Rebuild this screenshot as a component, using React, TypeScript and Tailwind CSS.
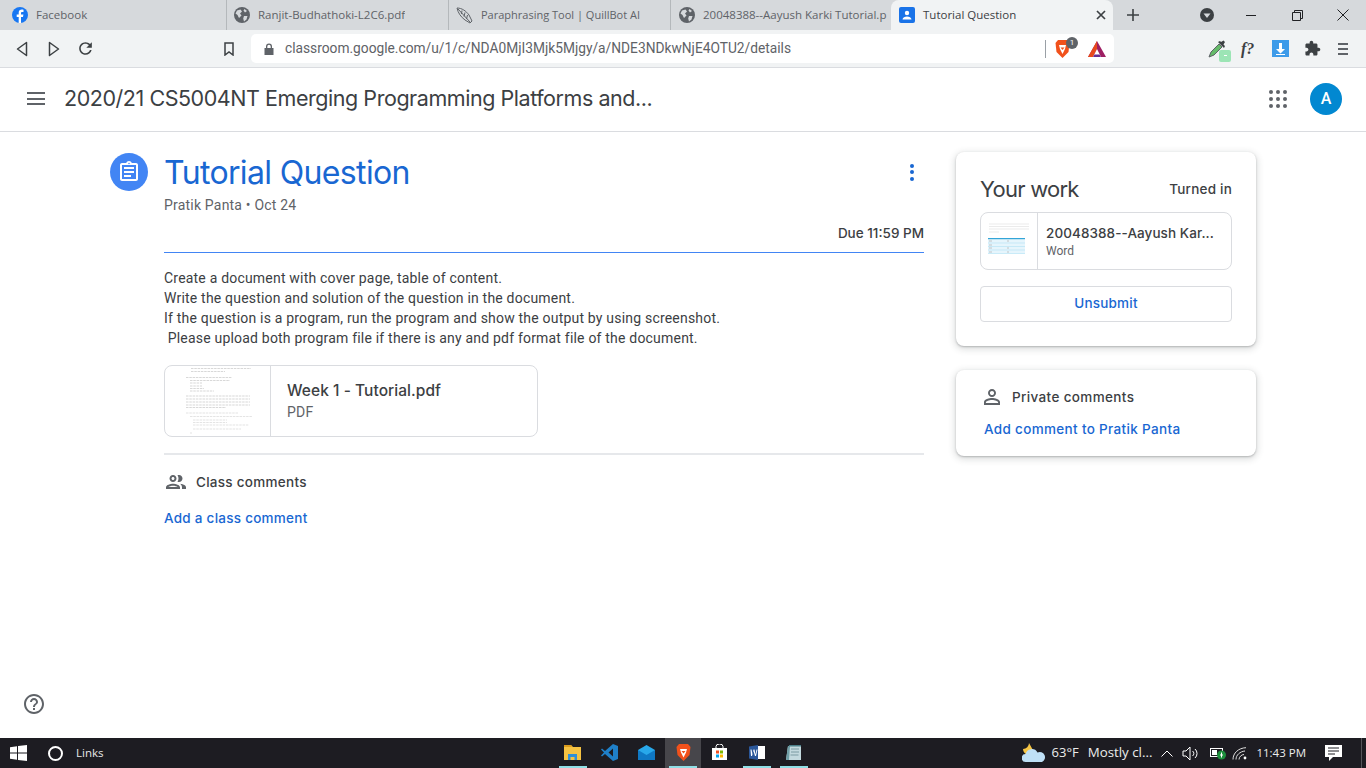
import React from "react";

const sans = "font-['Roboto','Liberation_Sans',sans-serif]";
const display = "font-['Inter','Roboto',sans-serif]";
const ui = "font-['Open_Sans','Liberation_Sans',sans-serif]";

const Mat = ({ d, size, color, className = "" }: { d: string; size: number; color: string; className?: string }) => (
  <svg width={size} height={size} viewBox="0 0 24 24" fill={color} className={"shrink-0 " + className}><path d={d} /></svg>
);

const Globe = () => (
  <svg width="16" height="16" viewBox="0 0 16 16" className="shrink-0">
    <circle cx="8" cy="8" r="8" fill="#5f6368" />
    <path d="M3 3.5 6.5 2.5 8 4.5 6 6.5 7.5 8.5 5 11 3.5 8 1.5 6.5ZM10 9h3.5l-1 3.5-2.5 2-.8-3ZM10.500 2 13 4l-2 1.500L9.500 3.500Z" fill="#d6d9dc" />
  </svg>
);

const Tab = ({ icon, title }: { icon: React.ReactNode; title: string }) => (
  <div className="flex h-full w-[222px] shrink-0 items-center gap-[8px] overflow-hidden border-r border-[#b4b8bb] pl-[7px] pr-[2px]">
    {icon}
    <span className={"overflow-hidden whitespace-nowrap text-[11.5px] text-[#5f6368] " + ui}>{title}</span>
  </div>
);

const TabStrip = () => (
  <div className="flex h-[30px] shrink-0 items-stretch bg-[#d6d9dc]">
    <div className="flex h-[30px] w-[227px] shrink-0 items-center gap-[8px] border-r border-[#b4b8bb] pl-[12px]">
      <svg width="16" height="16" viewBox="0 0 16 16" className="shrink-0">
        <circle cx="8" cy="8" r="8" fill="#1877f2" />
        <path d="M9 16V10h2l.4-2.400H9V6.200c0-.8.3-1.300 1.300-1.300h1.200V2.800C11.200 2.700 10.500 2.600 9.800 2.600 8 2.600 6.700 3.700 6.700 5.800v1.800H4.700V10h2v6Z" fill="#fff" />
      </svg>
      <span className={"text-[11.5px] text-[#5f6368] " + ui}>Facebook</span>
    </div>
    <Tab icon={<Globe />} title="Ranjit-Budhathoki-L2C6.pdf" />
    <div className="flex h-full w-[222px] shrink-0 items-center gap-[8px] overflow-hidden border-r border-[#b4b8bb] pl-[7px]">
      <svg width="17" height="17" viewBox="0 0 17 17" fill="none" stroke="#5f6368" strokeWidth="1" className="shrink-0">
        <path d="M1 1c5 0 9 3 12 7l3 6-2 2-5-3C5 10 2 6 1 1Z" />
        <path d="M2 2 14 15M6 3.500 5.500 7M9 5.500 8 9.500M11.500 8 10.500 12" />
      </svg>
      <span className={"whitespace-nowrap text-[11px] text-[#5f6368] " + ui}>Paraphrasing Tool | QuillBot AI</span>
    </div>
    <div className="flex h-full w-[220px] shrink-0 items-center gap-[8px] overflow-hidden pl-[8px]">
      <Globe />
      <span className={"whitespace-nowrap text-[11.5px] text-[#5f6368] " + ui}>20048388--Aayush Karki Tutorial.p</span>
    </div>
    <div className="flex h-full w-[222px] shrink-0 items-center rounded-t-[8px] bg-[#f1f3f4] pl-[8px] pr-[7px]">
      <svg width="16" height="16" viewBox="0 0 16 16" className="shrink-0">
        <rect width="16" height="16" rx="2" fill="#1a73e8" />
        <circle cx="8" cy="6" r="2.200" fill="#fff" />
        <path d="M3.500 12.500c0-2 2.500-3 4.500-3s4.500 1 4.500 3Z" fill="#fff" />
      </svg>
      <span className={"ml-[8px] flex-1 whitespace-nowrap text-[11.5px] text-[#3c4043] " + ui}>Tutorial Question</span>
      <svg width="10" height="10" viewBox="0 0 10 10" stroke="#3c4043" strokeWidth="1.700"><path d="M1 1l8 8M9 1 1 9" /></svg>
    </div>
    <div className="flex w-[40px] shrink-0 items-center justify-center">
      <svg width="14" height="14" viewBox="0 0 14 14" stroke="#3c4043" strokeWidth="1.600"><path d="M7 1v12M1 7h12" /></svg>
    </div>
    <div className="ml-[47px] flex w-[14px] shrink-0 items-center justify-center">
      <svg width="14" height="14" viewBox="0 0 14 14"><circle cx="7" cy="7" r="7" fill="#3c4043" /><path d="M3.500 5.500h7L7 10Z" fill="#d6d9dc" /></svg>
    </div>
    <div className="ml-[14px] flex w-[46px] shrink-0 items-center justify-center">
      <span className="block h-px w-[10px] bg-[#202124]" />
    </div>
    <div className="flex w-[46px] shrink-0 items-center justify-center">
      <svg width="11" height="11" viewBox="0 0 11 11" fill="none" stroke="#202124"><path d="M.500 2.500h8v8h-8ZM2.500 2.500v-2h8v8h-2" /></svg>
    </div>
    <div className="flex w-[46px] shrink-0 items-center justify-center">
      <svg width="12" height="12" viewBox="0 0 12 12" stroke="#202124"><path d="M.500.500l11 11M11.500.500l-11 11" /></svg>
    </div>
  </div>
);

const Toolbar = () => (
  <div className="flex h-[38px] shrink-0 items-center border-b border-[#dadce0] bg-[#f1f3f4]">
    <div className="flex w-[251px] shrink-0 items-center">
      <svg width="12" height="16" viewBox="0 0 12 16" fill="none" stroke="#3c4043" strokeWidth="1.500" className="ml-[16px]"><path d="M10.500 1.500 1.500 8l9 6.500Z" strokeLinejoin="round" /></svg>
      <svg width="12" height="16" viewBox="0 0 12 16" fill="none" stroke="#3c4043" strokeWidth="1.500" className="ml-[20px]"><path d="M1.500 1.500 10.500 8l-9 6.500Z" strokeLinejoin="round" /></svg>
      <svg width="19" height="19" viewBox="0 0 24 24" fill="#3c4043" className="ml-[16px]"><path d="M17.650 6.350C16.200 4.900 14.210 4 12 4c-4.420 0-7.990 3.580-7.990 8s3.570 8 7.990 8c3.730 0 6.840-2.550 7.730-6h-2.080c-.82 2.330-3.040 4-5.650 4-3.310 0-6-2.690-6-6s2.690-6 6-6c1.660 0 3.140.69 4.220 1.780L13 11h7V4l-2.350 2.350z" /></svg>
      <svg width="10" height="14" viewBox="0 0 10 14" fill="none" stroke="#3c4043" strokeWidth="1.500" className="ml-[129px]"><path d="M1 1h8v12L5 10 1 13Z" /></svg>
    </div>
    <div className="flex h-[29px] w-[863px] shrink-0 items-center rounded-[5px] bg-white pl-[13px] pr-[8px]">
      <svg width="10" height="12" viewBox="0 0 10 12" fill="#5f6368" className="shrink-0"><path d="M2 5V3.500a3 3 0 0 1 6 0V5h1.500v7H.5V5Zm1.300 0h3.400V3.500a1.700 1.700 0 0 0-3.400 0Z" /></svg>
      <span className={"ml-[11px] flex-1 whitespace-nowrap text-[13.75px] text-[#5f6368] " + sans}>classroom.google.com/u/1/c/NDA0MjI3Mjk5Mjgy/a/NDE3NDkwNjE4OTU2/details</span>
      <span className="mr-[9px] h-[18px] w-px bg-[#9aa0a6]" />
      <div className="relative mr-[18px] h-[18px] w-[15px]">
        <svg width="15" height="18" viewBox="0 0 15 18"><path d="M3 0h9l2.500 3-1 9L7.500 18 1.500 12l-1-9Z" fill="#f1511b" /><path d="M4 5h7l-1 4-2.500 5L5 9Z" fill="#fff" /><path d="M5.500 7.500 7.500 10l2-2.500Z" fill="#f1511b" /></svg>
        <span className={"absolute left-[11px] top-[-3px] flex h-[12px] w-[12px] items-center justify-center rounded-full bg-[#5f6368] text-[8px] text-white " + sans}>1</span>
      </div>
      <svg width="18" height="16" viewBox="0 0 18 16" className="shrink-0"><path d="M9 0 18 16H0Z" fill="#9e1f63" /><path d="M9 0 0 16h5L9 8Z" fill="#e8491c" /><path d="M9 8 5 16h8Z" fill="#fff" /><path d="M5 16h8l-1.500-2.500h-5Z" fill="#662d91" /></svg>
    </div>
    <div className="ml-[93px] flex shrink-0 items-center">
      <div className="relative h-[20px] w-[20px]">
        <svg width="20" height="20" viewBox="0 0 20 20"><path d="M2 18 4 13 12 5l3 3-8 8Z" fill="#66bb6a" stroke="#5f6368" /><path d="M11 3 17 9l1-2-1.500-1.500L18 3l-1.500-1.500L14 3 13 2Z" fill="#3c4043" /></svg>
        <span className="absolute bottom-[-3px] right-[-4px] flex h-[12px] w-[12px] items-center justify-center rounded-[2px] bg-[#9ce5b5]"><span className="h-px w-[3px] bg-white" /></span>
      </div>
      <span className="ml-[14px] w-[18px] font-['Liberation_Serif',serif] text-[16px] font-bold italic leading-none text-[#3c4043]">f?</span>
      <svg width="17" height="17" viewBox="0 0 17 17" className="ml-[13px]"><rect width="17" height="17" fill="#3d9be9" /><path d="M7 3h3v6h3l-4.500 4.500L4 9h3Z" fill="#fff" /><rect x="4" y="14" width="9" height="1" fill="#fff" /></svg>
      <Mat size={17} color="#3c4043" className="ml-[15px]" d="M20.500 11H19V7c0-1.100-.9-2-2-2h-4V3.500C13 2.120 11.880 1 10.500 1S8 2.120 8 3.500V5H4c-1.100 0-1.990.9-1.990 2v3.800H3.500c1.490 0 2.700 1.210 2.700 2.700s-1.210 2.700-2.700 2.700H2V20c0 1.100.9 2 2 2h3.800v-1.500c0-1.490 1.210-2.700 2.700-2.700 1.490 0 2.700 1.210 2.700 2.700V22H17c1.100 0 2-.9 2-2v-4h1.500c1.380 0 2.500-1.120 2.500-2.500S21.880 11 20.500 11z" />
      <div className="ml-[17px] flex w-[10px] flex-col gap-[3px]">
        <span className="h-[2px] bg-[#5f6368]" /><span className="h-[2px] bg-[#5f6368]" /><span className="h-[2px] bg-[#5f6368]" />
      </div>
    </div>
  </div>
);

const AppHeader = () => (
  <header className="flex h-[64px] shrink-0 items-center border-b border-[#dadce0] bg-white pb-[2px] pl-[27px] pr-[24px]">
    <div className="flex w-[18px] flex-col gap-[3.500px]">
      <span className="h-[2px] bg-[#5f6368]" /><span className="h-[2px] bg-[#5f6368]" /><span className="h-[2px] bg-[#5f6368]" />
    </div>
    <h1 className={"ml-[19px] flex-1 whitespace-nowrap text-[21.5px] tracking-[-0.45px] text-[#3c4043] " + display}>2020/21 CS5004NT Emerging Programming Platforms and...</h1>
    <div className="mr-[23px] grid grid-cols-3 gap-[3px]">
      {Array.from({ length: 9 }).map((_, i) => (
        <span key={i} className="h-[4px] w-[4px] rounded-full bg-[#5f6368]" />
      ))}
    </div>
    <div className={"flex h-[32px] w-[32px] items-center justify-center rounded-full bg-[#0288d1] text-[16px] font-medium text-white " + sans}>A</div>
  </header>
);

const PdfThumb = () => (
  <svg width="105" height="70" viewBox="0 0 105 70" className="shrink-0">
    <g stroke="#bdbdbd" strokeWidth="0.600" strokeDasharray="2.500 0.800">
      <path d="M26 2.500h60M26 5.500h34" />
      <path d="M21 11.500h46M25 14.500h40M25 17h12M25 20h12M25 22.500h14M25 25h24" />
      <path d="M21 30h64M21 33h64M21 36h64M21 39h64M21 41.500h40" />
    </g>
    <g stroke="#d2d2d2" strokeWidth="0.600" strokeDasharray="2.500 0.800">
      <path d="M21 47h52M25 50.500h62M28 54h34M28 56.500h34M28 59h56M28 63h48M25 67h2" />
    </g>
  </svg>
);

const WordThumb = () => (
  <svg width="56" height="56" viewBox="0 0 56 56" className="shrink-0">
    <g stroke="#e2e2e2" strokeWidth="0.700"><path d="M8 11h40M8 13.500h40M8 16h40M8 19h10" /></g>
    <rect x="7" y="25" width="37" height="1.500" fill="#33a5d8" />
    <rect x="7" y="26.500" width="37" height="14" fill="#e6f5fc" />
    <g stroke="#b8e4f5" strokeWidth="0.700"><path d="M7 30h37M7 33.500h37M7 37h37M7 40.500h37" /></g>
    <g stroke="#b0b0b0" strokeWidth="0.700"><path d="M8 28h3M8 32h3M8 35h3M8 39h3M26 28h2M26 35h2M26 39h2" /></g>
  </svg>
);

const LeftColumn = () => (
  <div className="ml-[110px] flex w-[814px] shrink-0 items-start gap-[16px]">
    <div className="mt-[21px] flex h-[38px] w-[38px] shrink-0 items-center justify-center rounded-full bg-[#4285f4]">
      <Mat size={24} color="#fff" d="M7 15h7v2H7zm0-4h10v2H7zm0-4h10v2H7zm12-4h-4.180C14.400 1.840 13.300 1 12 1s-2.400.84-2.820 2H5c-1.100 0-2 .9-2 2v14c0 1.100.9 2 2 2h14c1.100 0 2-.9 2-2V5c0-1.100-.9-2-2-2zm-7-.25c.41 0 .75.34.75.75s-.34.75-.75.75-.75-.34-.75-.75.34-.75.75-.75zM19 19H5V5h14v14z" />
    </div>
    <div className="flex w-[760px] flex-col">
      <div className="mt-[18px] flex h-[44px] items-center justify-between">
        <h2 className={"translate-y-px whitespace-nowrap text-[32px] font-normal leading-[44px] tracking-[-0.65px] text-[#1967d2] " + display}>Tutorial Question</h2>
        <div className="mr-[10px] flex flex-col gap-[2.500px]">
          <span className="h-[4px] w-[4px] rounded-full bg-[#1967d2]" /><span className="h-[4px] w-[4px] rounded-full bg-[#1967d2]" /><span className="h-[4px] w-[4px] rounded-full bg-[#1967d2]" />
        </div>
      </div>
      <p className={"mt-[1px] text-[14px] leading-[20px] tracking-[0.2px] text-[#5f6368] " + sans}>Pratik Panta • Oct 24</p>
      <p className={"mt-[8px] text-right text-[13.5px] font-medium leading-[20px] text-[#3c4043] " + display}>Due 11:59 PM</p>
      <div className="mt-[9px] h-[1px] bg-[#4285f4]" />
      <div className={"mt-[15px] text-[14px] leading-[20px] tracking-[0.2px] text-[#3c4043] " + sans}>
        <p>Create a document with cover page, table of content.</p>
        <p>Write the question and solution of the question in the document.</p>
        <p>If the question is a program, run the program and show the output by using screenshot.</p>
        <p className="whitespace-pre"> Please upload both program file if there is any and pdf format file of the document.</p>
      </div>
      <div className="mt-[17px] flex h-[72px] w-[374px] items-stretch overflow-hidden rounded-[8px] border border-[#dadce0]">
        <PdfThumb />
        <div className="flex flex-1 flex-col justify-center border-l border-[#dadce0] pl-[16px]">
          <span className={"text-[15.5px] font-medium leading-[22px] tracking-[0.05px] text-[#3c4043] " + display}>Week 1 - Tutorial.pdf</span>
          <span className={"text-[14px] leading-[20px] tracking-[0.2px] text-[#5f6368] " + sans}>PDF</span>
        </div>
      </div>
      <div className="mt-[16px] h-[2px] bg-[#e6e8eb]" />
      <div className="mt-[15px] flex items-center gap-[8px]">
        <Mat size={24} color="#5f6368" d="M9 13.750c-2.340 0-7 1.170-7 3.500V19h14v-1.750c0-2.330-4.660-3.500-7-3.500zM4.340 17c.84-.58 2.870-1.250 4.660-1.250s3.820.67 4.660 1.250H4.340zM9 12c1.930 0 3.500-1.570 3.500-3.500S10.930 5 9 5 5.500 6.570 5.500 8.500 7.070 12 9 12zm0-5c.83 0 1.500.67 1.500 1.500S9.830 10 9 10s-1.500-.67-1.500-1.500S8.170 7 9 7zm7.040 6.810c1.160.84 1.960 1.960 1.960 3.440V19h4v-1.750c0-2.020-3.500-3.170-5.960-3.440zM15 12c1.930 0 3.500-1.570 3.500-3.500S16.930 5 15 5c-.54 0-1.040.13-1.500.35.63.89 1 1.980 1 3.150s-.37 2.260-1 3.150c.46.22.96.35 1.500.35z" />
        <span className={"text-[13.5px] font-medium tracking-[0.28px] text-[#3c4043] " + display}>Class comments</span>
      </div>
      <span className={"mt-[14px] text-[13.5px] font-medium leading-[20px] tracking-[0.26px] text-[#1967d2] " + display}>Add a class comment</span>
    </div>
  </div>
);

const card = "rounded-[8px] bg-white shadow-[0_1px_2px_rgba(60,64,67,0.3),0_2px_6px_2px_rgba(60,64,67,0.15)]";

const RightColumn = () => (
  <div className="ml-[32px] mt-[20px] flex w-[300px] shrink-0 flex-col gap-[24px]">
    <section className={"h-[194px] p-[24px] " + card}>
      <div className="flex h-[26px] items-center justify-between">
        <h3 className={"text-[22px] font-normal tracking-[-0.75px] text-[#3c4043] " + display}>Your work</h3>
        <span className={"text-[13.5px] font-medium tracking-[0.22px] text-[#3c4043] " + display}>Turned in</span>
      </div>
      <div className="mt-[10px] flex h-[58px] items-stretch overflow-hidden rounded-[8px] border border-[#dadce0]">
        <WordThumb />
        <div className="flex w-0 flex-1 flex-col justify-center border-l border-[#dadce0] px-[8px]">
          <span className={"whitespace-nowrap text-[13.5px] font-medium leading-[20px] tracking-[0.08px] text-[#3c4043] " + display}>20048388--Aayush Kar...</span>
          <span className={"text-[12px] leading-[16px] text-[#5f6368] " + sans}>Word</span>
        </div>
      </div>
      <button className={"mt-[16px] block h-[36px] w-full rounded-[4px] border border-[#dadce0] pb-[2px] text-[13.5px] font-medium tracking-[0.2px] text-[#1967d2] " + display}>Unsubmit</button>
    </section>
    <section className={"h-[86px] px-[24px] pt-[15px] " + card}>
      <div className="flex items-center gap-[8px]">
        <Mat size={24} color="#5f6368" d="M12 5.900c1.160 0 2.100.94 2.100 2.100s-.94 2.100-2.100 2.100S9.900 9.160 9.900 8s.94-2.100 2.100-2.100m0 9c2.970 0 6.100 1.460 6.100 2.100v1.100H5.900V17c0-.64 3.130-2.100 6.100-2.100M12 4C9.790 4 8 5.790 8 8s1.790 4 4 4 4-1.790 4-4-1.790-4-4-4zm0 9c-2.670 0-8 1.340-8 4v3h16v-3c0-2.660-5.330-4-8-4z" />
        <span className={"text-[13.5px] font-medium tracking-[0.36px] text-[#3c4043] " + display}>Private comments</span>
      </div>
      <p className={"ml-[4px] mt-[10px] text-[13.5px] font-medium leading-[20px] tracking-[0.33px] text-[#1967d2] " + display}>Add comment to Pratik Panta</p>
    </section>
  </div>
);

const Slot = ({ w, active, underline, children }: { w: number; active?: boolean; underline?: boolean; children: React.ReactNode }) => (
  <div style={{ width: w }} className={"flex h-full shrink-0 flex-col items-center justify-center " + (active ? "bg-[#47464b]" : "")}>
    <div className="flex flex-1 items-center justify-center">{children}</div>
    <span className={"h-[2px] w-[28px] " + (underline ? "bg-[#8fdfe6]" : "bg-transparent")} />
  </div>
);

const Taskbar = () => (
  <footer className="flex h-[30px] shrink-0 items-center bg-[#1d1c22] text-white">
    <svg width="17" height="16" viewBox="0 0 17 16" className="ml-[10px] shrink-0" fill="#fff"><path d="M0 2.300 7 1.300V7.500H0ZM8 1.100 17 0V7.500H8ZM0 8.500H7V14.700L0 13.700ZM8 8.500H17V16L8 14.900Z" /></svg>
    <span className="ml-[21px] h-[15px] w-[15px] shrink-0 rounded-full border-[2px] border-white" />
    <span className={"ml-[13px] w-[478px] shrink-0 text-[11.5px] text-[#e8e8e8] " + ui}>Links</span>
    <div className="flex h-full items-stretch">
      <Slot w={37} underline>
        <svg width="17" height="15" viewBox="0 0 17 15"><path d="M0 0h7l2 2h8v13H0Z" fill="#f5c242" /><path d="M0 0h7l1 2H0Z" fill="#d99a1c" /><path d="M4 9h9v6h-2.500v-3h-4v3H4Z" fill="#2f8fd6" /></svg>
      </Slot>
      <Slot w={36}>
        <svg width="17" height="17" viewBox="0 0 17 17"><path d="M12 0 17 2v13l-5 2-8-7-3 2.500L0 11.500 3 8.500 0 5.500 1 4.500l3 2.500Z" fill="#1f80c9" /><path d="M12 4.500 7.500 8.500 12 12.500Z" fill="#1d1c22" /></svg>
      </Slot>
      <Slot w={38}>
        <svg width="17" height="15" viewBox="0 0 17 15"><path d="M0 5 8.500 0 17 5v10H0Z" fill="#28a8ea" /><path d="M0 5 8.500 10 17 5v10H0Z" fill="#0f78c4" /></svg>
      </Slot>
      <Slot w={36} active underline>
        <svg width="15" height="17" viewBox="0 0 15 17"><path d="M3 0h9l2.500 3-1 8L7.500 17 1.500 11l-1-8Z" fill="#f1511b" /><path d="M4 5h7l-1 3.500-2.500 5L5 8.500Z" fill="#fff" /><path d="M5.500 7 7.500 9.500l2-2.500Z" fill="#f1511b" /></svg>
      </Slot>
      <Slot w={37}>
        <svg width="15" height="16" viewBox="0 0 15 16"><path d="M4 4V2.500a3.500 2.500 0 0 1 7 0V4" fill="none" stroke="#fff" /><rect y="4" width="15" height="12" fill="#fff" /><rect x="4" y="6.500" width="3" height="3" fill="#f25022" /><rect x="8" y="6.500" width="3" height="3" fill="#7fba00" /><rect x="4" y="10.500" width="3" height="3" fill="#00a4ef" /><rect x="8" y="10.500" width="3" height="3" fill="#ffb900" /></svg>
      </Slot>
      <Slot w={37} underline>
        <svg width="16" height="15" viewBox="0 0 16 15"><rect x="6" y="1" width="10" height="13" fill="#fff" /><path d="M0 1.500 9 0v15L0 13.500Z" fill="#2b579a" /><path d="M1.500 4.500h1l1 5 1-5h1l1 5 1-5h1L7 11H6L4.500 6 3 11H2Z" fill="#fff" /></svg>
      </Slot>
      <Slot w={37} underline>
        <svg width="15" height="16" viewBox="0 0 15 16"><path d="M2 2h13v14H0Z" fill="#c3d9de" /><path d="M2 2 0 16h3L4 2Z" fill="#6f9ea6" /><path d="M5 5h8M5 8h8M4.500 11h8" stroke="#7a9aa2" /><path d="M3 1h12v1.500H3Z" fill="#4a7d87" /></svg>
      </Slot>
    </div>
    <div className="ml-auto flex h-full items-center">
      <svg width="24" height="20" viewBox="0 0 24 20"><path d="M7 0a6 6 0 0 1-6 6 6 6 0 0 0 11 3Z" fill="#f6c544" /><path d="M4 19a4 4 0 0 1-.5-8 6.500 6.500 0 0 1 12-1.500A5 5 0 0 1 20 19Z" fill="#bfe0f6" /></svg>
      <span className={"ml-[6px] whitespace-nowrap text-[13px] text-[#ececec] " + ui}>63°F</span>
      <span className={"ml-[9px] whitespace-nowrap text-[13.3px] text-[#ececec] " + ui}>Mostly cl...</span>
      <svg width="12" height="7" viewBox="0 0 12 7" fill="none" stroke="#fff" className="ml-[9px]"><path d="M.5 6.500 6 1l5.500 5.500" /></svg>
      <svg width="17" height="15" viewBox="0 0 17 15" fill="none" stroke="#fff" className="ml-[9px]"><path d="M1 5h3l4-4v13l-4-4H1Z" /><path d="M10.500 5a3 3 0 0 1 0 5M13 3a6 6 0 0 1 0 9" /></svg>
      <svg width="16" height="13" viewBox="0 0 16 13" className="ml-[11px]"><rect x=".5" y="1.500" width="12" height="8" fill="none" stroke="#fff" /><rect x="2" y="3" width="5" height="5" fill="#fff" /><circle cx="11.500" cy="8" r="4.500" fill="#1c8f3c" /><path d="M11.500 5.500v5M10 8h3" stroke="#fff" /></svg>
      <svg width="16" height="13" viewBox="0 0 16 13" fill="none" stroke="#ddd" className="ml-[6px]"><path d="M1 12.500C1 6 6.500 1 14 .7M4 12.500C4 8 8 4.500 13 4M7 12.500C7 10 9.500 7.500 12 7.500" /><circle cx="13" cy="11" r="1.400" fill="#fff" stroke="none" /></svg>
      <span className={"ml-[8px] whitespace-nowrap text-[11.5px] text-[#ececec] " + ui}>11:43 PM</span>
      <svg width="17" height="16" viewBox="0 0 17 16" className="ml-[19px]"><path d="M0 0h17v12H8l-4 4v-4H0Z" fill="#fff" /><path d="M3 3h11M3 6h11M3 9h7" stroke="#1d1c22" /></svg>
      <span className="ml-[19px] mr-[2px] h-full w-px bg-[#55555a]" />
      <span className="w-[2px]" />
    </div>
  </footer>
);

export default function App() {
  return (
    <div className="relative flex h-[768px] w-[1366px] flex-col overflow-hidden bg-white">
      <TabStrip />
      <Toolbar />
      <AppHeader />
      <main className="flex flex-1 items-start">
        <LeftColumn />
        <RightColumn />
      </main>
      <div className="absolute bottom-[52px] left-[22px]">
        <Mat size={24} color="#5f6368" d="M11 18h2v-2h-2v2zm1-16C6.480 2 2 6.480 2 12s4.480 10 10 10 10-4.480 10-10S17.520 2 12 2zm0 18c-4.410 0-8-3.590-8-8s3.590-8 8-8 8 3.590 8 8-3.590 8-8 8zm0-14c-2.210 0-4 1.790-4 4h2c0-1.100.9-2 2-2s2 .9 2 2c0 2-3 1.750-3 5h2c0-2.250 3-2.500 3-5 0-2.210-1.790-4-4-4z" />
      </div>
      <Taskbar />
    </div>
  );
}
